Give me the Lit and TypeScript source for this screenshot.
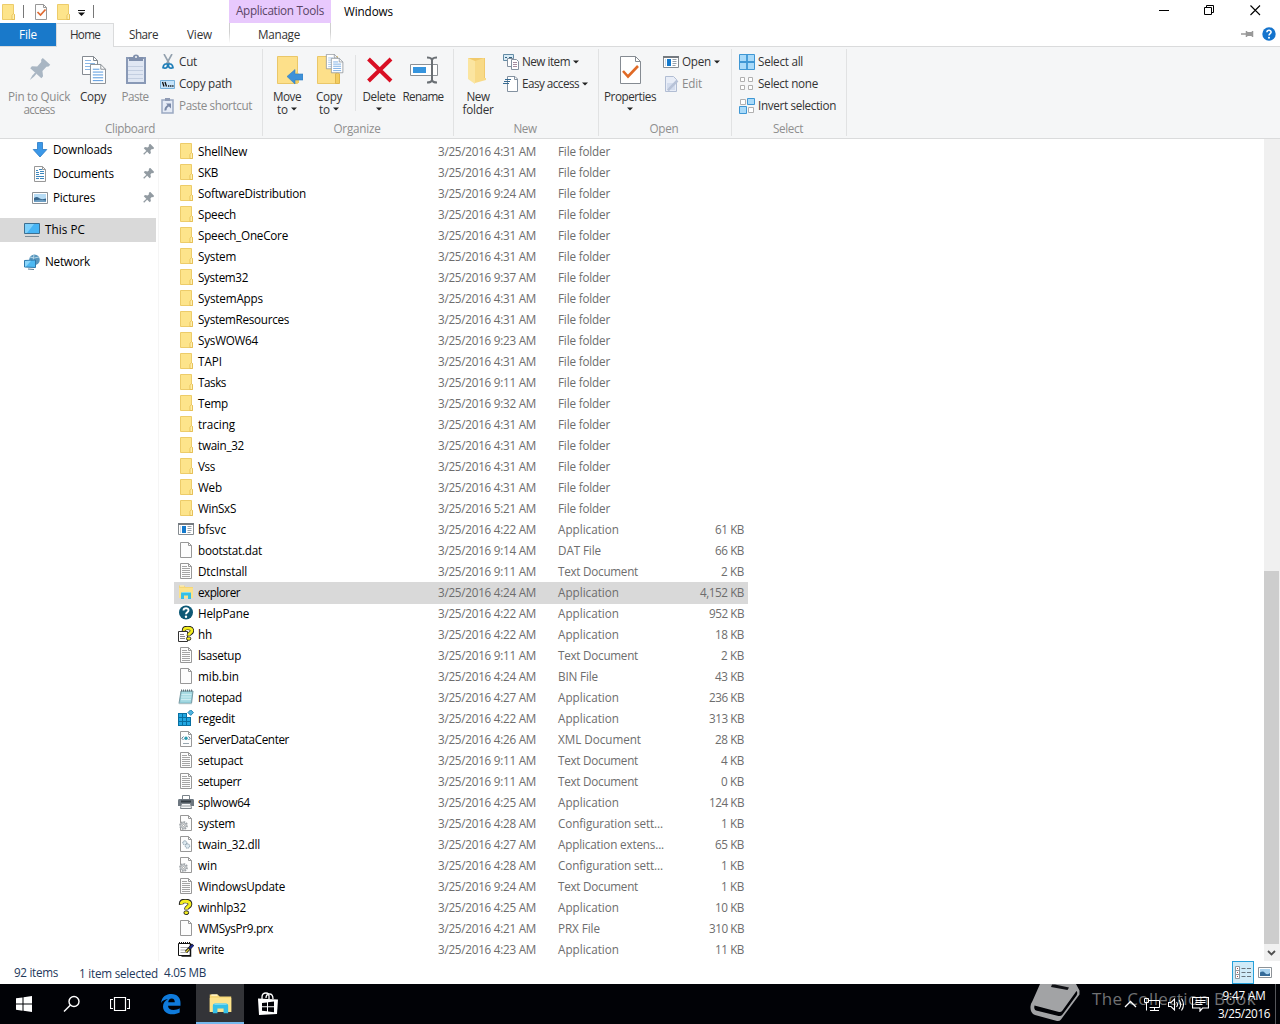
import { LitElement, html, svg, css, nothing, TemplateResult } from "lit";
import { customElement } from "lit/decorators.js";

const FAMILY = '"Open Sans", "Noto Sans", sans-serif';
const pen = document.createElement("canvas").getContext("2d")!;

/* Text set to a known width by spreading the difference over its letters. */
const fit = (text: string, width: number, size = 11.7) => {
  pen.font = `${size}px ${FAMILY}`;
  const gap = (width - pen.measureText(text).width) / text.length;
  return html`<span class="fit" style="font-size:${size}px;letter-spacing:${gap.toFixed(3)}px">${text}</span>`;
};

const icon = (w: number, h: number, body: unknown) =>
  html`<svg class="ico" width=${w} height=${h} viewBox="0 0 ${w} ${h}" fill="none">${body}</svg>`;

const page = svg`<path d="M2.500 .5h8l3 3v12h-11z" fill="#fdfdfd" stroke="#989898"/><path d="M10.500 .5v3h3" stroke="#989898"/>`;
const gear = svg`<circle cx="5.500" cy="10.500" r="3.400" fill="#e5e7e9" stroke="#a0a5a9" stroke-width="2" stroke-dasharray="1.600 1"/><circle cx="5.500" cy="10.500" r="2.600" fill="#dfe2e4" stroke="#a0a5a9" stroke-width=".8"/><circle cx="5.500" cy="10.500" r="1" fill="#fff" stroke="#888" stroke-width=".6"/>`;
const question = svg`<path d="M3.200 5.600C2.800 2.300 4.800 2 7.300 2s4.700.8 4.700 3.300c0 2.800-3.700 2.500-3.700 5.200" stroke="#222" stroke-width="4.600"/><path d="M3.300 5.300C3.200 2.600 4.800 2.200 7.300 2.200S11.900 2.900 11.900 5.200c0 2.600-3.600 2.400-3.600 5" stroke="#f4ee20" stroke-width="3"/><rect x="6" y="11.900" width="4.600" height="3.600" rx="1.700" fill="#f4ee20" stroke="#222"/>`;
const explorerArt = svg`<path d="M1 1.500h5l1.500 1.500H15v11H1z" fill="#f5d778"/><path d="M1 4h14v10H1z" fill="#fce28b"/><path d="M2 2h4" stroke="#fff6cf"/><path d="M3 15V9.500Q3 8 4.500 8h7Q13 8 13 9.500V15h-3v-3.500H6V15z" fill="#35bfe6"/><path d="M4 8.500h8" stroke="#7edbf3"/>`;

const small: Record<string, unknown> = {
  folder: svg`<path d="M2.500 .5h11v9l1 1v5h-12z" fill="#fde48b" stroke="#edcc6a"/><path d="M12 15.500v-4l1.500-2 1 1v5z" fill="#fff0ae" stroke="#e2b94c" stroke-width=".8"/>`,
  app: svg`<path d="M.5 2.500h15v11H.5z" fill="#fff" stroke="#858b90"/><path d="M0 3h16" stroke="#747a80" stroke-width="2"/><path d="M4 5h4v7H4z" fill="#1479cc"/><path d="M2.500 5v7" stroke="#c9d9e8"/><path d="M9.500 5.500h4M9.500 7.500h4M9.500 9.500h4M9.500 11.500h3" stroke="#96a1ab"/>`,
  file: page,
  text: svg`${page}<path d="M4 3.500h5M4 5.500h8M4 7.500h8M4 9.500h8M4 11.500h8M4 13.500h8" stroke="#a5a5a5"/>`,
  explorer: explorerArt,
  help: svg`<circle cx="8" cy="7.500" r="7" fill="#0d5875"/><path d="M5.500 5.500C5.600 2.400 10.600 2.500 10.500 5.300c0 2-2.500 2-2.500 4" stroke="#fff" stroke-width="1.900"/><circle cx="8" cy="11.800" r="1.200" fill="#fff"/>`,
  hh: svg`<path d="M.5 5.500h9v10h-9z" fill="#fff" stroke="#333"/><path d="M2 8.500h4M2 10.500h5M2 12.500h5" stroke="#888"/><g transform="translate(3 0) scale(.92)">${question}</g>`,
  notepad: svg`<path d="M3 2h12l-1.500 12.500H1z" fill="#8fc9d5" stroke="#7899a2"/><path d="M4 3l10 .3-1.300 9.500H2.500z" fill="#a9dce4"/><path d="M3.500 5.500h10M3 8h10M3 10.500h10" stroke="#d5f0f4" stroke-width=".8"/><path d="M3 1.500h12" stroke="#60747a" stroke-width="2" stroke-dasharray="1 1"/><path d="M1 15h13" stroke="#dfe8e9"/>`,
  regedit: svg`<path d="M0 3h9v4h4v9H0z" fill="#086fa1"/><path d="M1 4h3v3H1zM5 4h3v3H5zM1 8h3v3H1zM5 8h3v3H5zM1 12h3v3H1zM5 12h3v3H5zM9 12h3v3H9zM9 8h3v3H9z" fill="#22a7e2"/><path d="M12.700 -.2l2.800 2.800-2.800 2.800-2.800-2.800z" fill="#4fb4e0" stroke="#1274a5" stroke-width=".8"/>`,
  xml: svg`${page}<path d="M5.500 5.500L3.800 7.300l1.700 1.700M10.500 5.500l1.700 1.800L10.500 9" stroke="#587b96"/><circle cx="8" cy="7.300" r="1.700" fill="#2b9bb0"/><path d="M5 12.500h6" stroke="#99a7b0"/>`,
  printer: svg`<path d="M4.500 1.500h7v5h-7z" fill="#fff" stroke="#7a838a"/><path d="M1 5h14q1 0 1 1.500V12H0V6.500Q0 5 1 5z" fill="#6d7780"/><path d="M3 7.500h10" stroke="#333c43" stroke-width="2"/><path d="M3.500 9.500h9l1 5h-11z" fill="#f4f6f7" stroke="#7b8389"/><path d="M4 12h8" stroke="#9ba1a5"/>`,
  config: svg`${page}${gear}`,
  dll: svg`${page}<circle cx="6.800" cy="6.800" r="2" fill="#dce8ef" stroke="#8094a3" stroke-dasharray="1.200 .6"/><circle cx="9.500" cy="10" r="2.200" fill="#dce8ef" stroke="#8094a3" stroke-dasharray="1.200 .6"/>`,
  winhlp: question,
  write: svg`<path d="M.5 2.500h12v12H.5z" fill="#fff" stroke="#111"/><path d="M1 2h12" stroke="#111" stroke-width="2" stroke-dasharray="1 1"/><path d="M2.500 6.500h8M2.500 9h7M2.500 11.500h7" stroke="#aaa"/><path d="M12.500 3v12h-9" stroke="#111" stroke-width="1.500"/><path d="M15 3.500L8 11" stroke="#111" stroke-width="3"/><path d="M15 4l-3.500 3.500" stroke="#1d2b8f" stroke-width="2"/><path d="M11 8l-3 3" stroke="#e8d436" stroke-width="1.300"/>`,
  download: svg`<path d="M5.500 .5h5v7h4.300L8 15 1.200 7.500h4.300z" fill="#3b98e8" stroke="#2778c4" stroke-width=".8"/>`,
  documents: svg`${page}<path d="M4 4.500h2M7 3.500h3M4 6.500h3M8 5.500h4M4 8.500h3M8 7.500h4M4 10.500h8M4 12.500h3M8 12.500h4" stroke="#3d87bd"/>`,
  pictures: svg`<path d="M.5 2.500h15v11H.5z" fill="#fff" stroke="#8d9297"/><path d="M2 4h12v8H2z" fill="#b7dcf5"/><path d="M2 8q3-2 5 0t7 .5V12H2z" fill="#38668c"/><path d="M2 10.500q6-1.500 12 0V12H2z" fill="#6fa0c4"/>`,
  pc: svg`<path d="M.5 1.500h15v10H.5z" fill="#46b4f4" stroke="#3c6f91"/><path d="M1 2h9L3 11H1z" fill="#7dd0fb"/><path d="M1 14.500h14" stroke="#7d8c96"/>`,
  network: svg`<circle cx="10.500" cy="5.800" r="5.300" fill="#5896bd"/><path d="M6 3q4 2 9 0M10 .5q-2 5 1 10" stroke="#b3d5e6"/><path d="M.5 6.500l11-.5v7.500l-11-.5z" fill="#4db9f3" stroke="#2d78aa"/><path d="M1 7l6-.2L2 12.500H1z" fill="#8bd6fb"/><path d="M4 15l6 .5" stroke="#5a7d94"/>`,
  cut: svg`<path d="M4 0l5.500 10M12 0L6.500 10" stroke="#93a1ae" stroke-width="1.600"/><path d="M5.800 10Q3.500 10 3 13.800q2.500 1 4-.5.500-1.500 1-3.300zM10.200 10q2.300 0 2.800 3.800-2.500 1-4-.5-.5-1.500-1-3.300z" stroke="#1d7db7" stroke-width="1.700"/>`,
  path: svg`<path d="M.5 4.500h14v8H.5z" fill="#c5e3fa" stroke="#76afd9"/><path d="M2.500 6l1.500 4.500M5 6l1.500 4.500" stroke="#111" stroke-width="1.300"/><path d="M8 10h5.500" stroke="#111" stroke-width="1.500" stroke-dasharray="1.300 .8"/>`,
  shortcut: svg`<path d="M2 2h11v13H2z" fill="#e5ebf6" stroke="#9ba9c2" stroke-width="1.500"/><path d="M5 0h5v3H5z" fill="#8f9bb4"/><path d="M5.500 12.500q-.5-3 3-5" stroke="#7988a7" stroke-width="2"/><path d="M6 5.500h5v5z" fill="#7988a7"/>`,
  newItem: svg`<path d="M.5 .5h10v6H.5z" fill="#d8ebf6" stroke="#638ba5"/><path d="M2 3.500h2M6 3.500h3" stroke="#32627f"/><path d="M4.500 4.500h6v8h-6z" fill="#fff" stroke="#8391a0"/><path d="M8.500 5.500h5l2 2v8h-7z" fill="#fff" stroke="#8391a0"/><path d="M10 8.500h4M10 10.500h4M10 12.500h4" stroke="#a58b9f"/>`,
  access: svg`<path d="M4.500 .5h7.500l2.500 2.500v12.500h-10z" fill="#fff" stroke="#8391a0"/><path d="M11.500 .5v3h3" stroke="#8391a0"/><path d="M2 3.500h6M1 5.500h6M0 7.500h6" stroke="#376b91"/>`,
  edit: svg`<path d="M2.500 .5h8l3 3v12h-11z" fill="#e8edf7" stroke="#b1bdd3"/><path d="M4 7h8v7H4z" fill="#d3dced"/><path d="M14.500 4.500L7 12l-2 2.500" stroke="#b7c2d7" stroke-width="2.500"/>`,
  all: svg`<path d="M.5 .5h15v15H.5z" fill="#a9daf9" stroke="#3f97d4"/><path d="M8 0v16M0 8h16" stroke="#3f97d4" stroke-width="1.800"/>`,
  none: svg`<path d="M1.500 1.500h4v4h-4zM9.500 1.500h4v4h-4zM1.500 9.500h4v4h-4zM9.500 9.500h4v4h-4z" fill="#fff" stroke="#b0b0b0"/>`,
  invert: svg`<path d="M1.500 1.500h5v5h-5zM9.500 9.500h5v5h-5z" fill="#fff" stroke="#b0b0b0"/><path d="M8.500 .5h7v6h-7zM.5 8.500h7v7h-7z" fill="#a9daf9" stroke="#3f97d4"/>`,
};

const sIcon = (name: string) => icon(16, 16, small[name]);

const bigPage = svg`<path d="M.5 .5h11l5 5v15H.5z" fill="#fff" stroke="#858b92"/><path d="M11.500 .5v5h5" stroke="#858b92"/>`;
const lines = (c: string) => svg`<path d="M3 5.500h7M3 8.500h11M3 11.500h11M3 14.500h11M3 17.500h11" stroke=${c}/>`;
const big: Record<string, unknown> = {
  pin: svg`<g transform="translate(17.500 14) rotate(42)"><path d="M-5-9H5v2.500L3.500-5v6l4 3.500V7h-15V4.500l4-3.500v-6L-5-6.500z" fill="#a9b6c3"/><path d="M-1 7h2v4l-1 5-1-5z" fill="#a9b6c3"/></g>`,
  copy: svg`<g transform="translate(5 2)"><path d="M.5 .5h11l4 4v14H.5z" fill="#fff" stroke="#858b92"/><path d="M11.500 .5v4h4" stroke="#858b92"/><path d="M3 4.500h6M3 7.500h10M3 10.500h10M3 13.500h10" stroke="#8bb7e6"/></g><g transform="translate(13 10) scale(.94 .95)">${bigPage}${lines("#4f94dc")}</g>`,
  paste: svg`<path d="M8 4h18v25H8z" fill="#e0e7f3" stroke="#8999b6" stroke-width="2"/><path d="M9 12.500h15M9 16.500h15M9 20.500h15M9 24.500h15" stroke="#c3cee0"/><path d="M10 3h4q0-2.500 3-2.500T20 3h4v4H10z" fill="#8090ad"/><circle cx="17" cy="3" r="1" fill="#f5f6f7"/>`,
  move: svg`<path d="M6.500 2.500h20v27h-20z" fill="#fde08a" stroke="#eac769"/><path d="M24 29V20l2-2 2 2v9z" fill="#f3cd61"/><path d="M16 22.500l8-7v4.500h8v6h-8v4z" fill="#3e91d8" stroke="#2f80c4" stroke-width=".6"/>`,
  copyTo: svg`<path d="M4.500 2.500h20v27h-20z" fill="#fde08a" stroke="#eac769"/><path d="M22.500 29.500V20l2-2 2 2v9.500z" fill="#f3cd61" stroke="#dfb64d"/><g transform="translate(13 0) scale(.72)">${bigPage}${lines("#8bb7e6")}</g><g transform="translate(18 4) scale(.72)">${bigPage}${lines("#4f94dc")}</g>`,
  delete: svg`<path d="M5.500 5L28 27M28 5L5.500 27" stroke="#d90f24" stroke-width="4"/>`,
  rename: svg`<path d="M3.500 10.500h27v11h-27z" fill="#fff" stroke="#8b9095"/><path d="M6 13h13v6H6z" fill="#3695de"/><path d="M25 4v24M20 3.500q4 0 5 2 1-2 5-2M20 28.500q4 0 5-2 1 2 5 2" stroke="#6b7075" stroke-width="2"/>`,
  newFolder: svg`<path d="M6 4h17v21H6z" fill="#f1ca6c"/><path d="M6 4l7 3v23l-7-5z" fill="#fbe5a0"/><path d="M13 7l9-3v20h2v2l-11 3z" fill="#f8da87"/>`,
  properties: svg`<path d="M6.500 2.500h15l5 5v22h-20z" fill="#fff" stroke="#858b92"/><path d="M21.500 2.500v5h5" stroke="#858b92"/><path d="M9 17l5 5.500L24 12" stroke="#e06a26" stroke-width="2.600"/>`,
};

const arrow = html`<svg class="ico" width="6" height="4" viewBox="0 0 6 4"><path d="M0 .5h6L3 3.500z" fill="#222"/></svg>`;

type Line = [string, number];
const bigButton = (art: string, width: number, rows: Line[], opts: { dim?: boolean; drop?: number } = {}) => html`
  <div class="big ${opts.dim ? "dim" : ""}" style="width:${width}px">
    ${icon(32, 32, big[art])}
    ${rows.map(([t, w], i) => html`<div class="cap">${fit(t, w)}${opts.drop === i ? arrow : nothing}</div>`)}
    ${opts.drop === rows.length ? html`<div class="cap lone">${arrow}</div>` : nothing}
  </div>`;
const cmd = (art: string, t: string, w: number, opts: { dim?: boolean; drop?: boolean } = {}) =>
  html`<div class="cmd ${opts.dim ? "dim" : ""}">${sIcon(art)}${fit(t, w)}${opts.drop ? arrow : nothing}</div>`;
const group = (cls: string, title: string, w: number, body: TemplateResult) =>
  html`<section class="group ${cls}"><div class="tools">${body}</div><div class="title">${fit(title, w)}</div></section>`;

type Row = [string, string, number, string, string, string?];
const rows: Row[] = [
  ["folder", "ShellNew", 49, "4:31", "File folder"],
  ["folder", "SKB", 20, "4:31", "File folder"],
  ["folder", "SoftwareDistribution", 108, "9:24", "File folder"],
  ["folder", "Speech", 38, "4:31", "File folder"],
  ["folder", "Speech_OneCore", 90, "4:31", "File folder"],
  ["folder", "System", 38, "4:31", "File folder"],
  ["folder", "System32", 50, "9:37", "File folder"],
  ["folder", "SystemApps", 65, "4:31", "File folder"],
  ["folder", "SystemResources", 91, "4:31", "File folder"],
  ["folder", "SysWOW64", 60, "9:23", "File folder"],
  ["folder", "TAPI", 24, "4:31", "File folder"],
  ["folder", "Tasks", 28, "9:11", "File folder"],
  ["folder", "Temp", 30, "9:32", "File folder"],
  ["folder", "tracing", 37, "4:31", "File folder"],
  ["folder", "twain_32", 46, "4:31", "File folder"],
  ["folder", "Vss", 17, "4:31", "File folder"],
  ["folder", "Web", 24, "4:31", "File folder"],
  ["folder", "WinSxS", 38, "5:21", "File folder"],
  ["app", "bfsvc", 28, "4:22", "Application", "61 KB"],
  ["file", "bootstat.dat", 64, "9:14", "DAT File", "66 KB"],
  ["text", "DtcInstall", 49, "9:11", "Text Document", "2 KB"],
  ["explorer", "explorer", 42, "4:24", "Application", "4,152 KB"],
  ["help", "HelpPane", 51, "4:22", "Application", "952 KB"],
  ["hh", "hh", 14, "4:22", "Application", "18 KB"],
  ["text", "lsasetup", 43, "9:11", "Text Document", "2 KB"],
  ["file", "mib.bin", 41, "4:24", "BIN File", "43 KB"],
  ["notepad", "notepad", 44, "4:27", "Application", "236 KB"],
  ["regedit", "regedit", 37, "4:22", "Application", "313 KB"],
  ["xml", "ServerDataCenter", 91, "4:26", "XML Document", "28 KB"],
  ["text", "setupact", 45, "9:11", "Text Document", "4 KB"],
  ["text", "setuperr", 43, "9:11", "Text Document", "0 KB"],
  ["printer", "splwow64", 52, "4:25", "Application", "124 KB"],
  ["config", "system", 37, "4:28", "Configuration sett...", "1 KB"],
  ["dll", "twain_32.dll", 62, "4:27", "Application extens...", "65 KB"],
  ["config", "win", 19, "4:28", "Configuration sett...", "1 KB"],
  ["text", "WindowsUpdate", 87, "9:24", "Text Document", "1 KB"],
  ["winhlp", "winhlp32", 48, "4:25", "Application", "10 KB"],
  ["file", "WMSysPr9.prx", 75, "4:21", "PRX File", "310 KB"],
  ["write", "write", 26, "4:23", "Application", "11 KB"],
];
const typeWidth: Record<string, number> = {
  "File folder": 52, Application: 61, "DAT File": 43, "Text Document": 80, "BIN File": 40,
  "XML Document": 83, "Configuration sett...": 105, "Application extens...": 106, "PRX File": 42,
};
const sizeWidth: Record<number, number> = { 4: 23, 5: 29, 6: 35, 8: 44 };

const pinMark = icon(12, 12, svg`<g transform="translate(7 5) rotate(45)"><path d="M-3-4.500h6v1.800l-1 .7V0l2.200 1.500V3.200h-8.400V1.500L-2 0v-2l-1-.7z" fill="#929ba2"/><path d="M0 3v4.500" stroke="#929ba2" stroke-width="1.300"/></g>`);
const nav = (art: string, t: string, w: number) =>
  html`<div class="nav sub">${sIcon(art)}${fit(t, w)}<span class="grow"></span>${pinMark}</div>`;

@customElement("app-root")
export class AppRoot extends LitElement {
  static styles = css`
    :host { display: flex; flex-direction: column; position: relative; width: 1280px; height: 1024px; overflow: hidden; background: #fff; color: #000; font-family: "Open Sans", "Noto Sans", sans-serif; font-size: 11.7px; line-height: 16px; }
    * { box-sizing: border-box; }
    .fit { white-space: pre; flex: none; }
    .ico { display: block; flex: none; }
    .grow { flex: 1; }
    .top { display: flex; height: 46px; flex: none; }
    .left { width: 229px; display: flex; flex-direction: column; }
    .quick { height: 23px; display: flex; align-items: center; }
    .bar { width: 1px; height: 13px; background: #777; }
    .q1 { margin-left: 7px; }
    .q2 { margin: 0 0 0 9px; }
    .q3 { margin-left: 6px; }
    .q4 { margin: 3px 0 0 7px; }
    .q5 { margin-left: 8px; }
    .tabs { height: 23px; display: flex; color: #333; }
    .tab { height: 23px; display: flex; align-items: center; justify-content: center; width: 56px; padding-bottom: 2px; }
    .tab.file { background: #1979ca; color: #fff; padding-bottom: 1px; }
    .tab.home { width: 58px; height: 24px; background: #f5f6f7; border: 1px solid #dadbdc; border-bottom: 0; z-index: 1; padding-bottom: 3px; }
    .tab.share { width: 59px; }
    .tab.view { width: 53px; }
    .context { width: 102px; display: flex; flex-direction: column; }
    .band { height: 23px; background: #e8c9fd; color: #5a4566; display: flex; justify-content: center; padding-top: 2px; }
    .manage { height: 23px; display: flex; align-items: center; justify-content: center; color: #333; padding: 0 2px 2px 0; border: 0 solid; border-width: 0 1px; border-image: linear-gradient(#cfcfcf 40%, #fff 85%) 1; }
    .caption { padding: 3px 0 0 13px; }
    .window { width: 140px; display: flex; flex-direction: column; }
    .sys { display: flex; padding: 5px 0 0 18px; gap: 34px; height: 26px; }
    .assist { display: flex; align-items: center; justify-content: flex-end; gap: 8px; padding-right: 4px; height: 15px; }
    .ribbon { flex: none; height: 93px; display: flex; background: #f5f6f7; border: 1px solid #dadbdc; border-width: 1px 0; color: #333; }
    .group { height: 91px; display: flex; flex-direction: column; border-right: 1px solid; border-image: linear-gradient(#f5f6f7 3px, #e1e2e3 3px, #e1e2e3 88px, #f5f6f7 88px) 1; }
    .g1 { width: 263px; } .g2 { width: 191px; } .g3 { width: 145px; } .g4 { width: 133px; } .g5 { width: 115px; }
    .g1 .tools { padding-left: 5px; } .g2 .tools { padding-left: 3px; } .g3 .tools { padding-left: 4px; } .g4 .tools { padding-left: 3px; } .g5 .tools { padding-left: 2px; }
    .tools { display: flex; height: 73px; }
    .title { display: flex; justify-content: center; color: #8f8f8f; padding-right: 2px; }
    .big { display: flex; flex-direction: column; align-items: center; padding-top: 7px; }
    .big .ico { margin-bottom: 3px; }
    .cap { height: 13px; line-height: 12px; display: flex; align-items: center; justify-content: center; gap: 3px; }
    .cap .ico { margin: 1px 0 0; }
    .cap.lone { height: 12px; }
    .dim { color: #8b8b8b; }
    .list { padding: 4px 0 0 5px; }
    .g1 .list { padding-left: 3px; }
    .cmd { height: 22px; display: flex; align-items: center; gap: 3px; }
    .cmd .fit, .nav .fit { margin-bottom: 2px; }
    .split { width: 1px; height: 56px; background: #e1e2e3; margin: 8px 2px 0 5px; }
    .body { height: 822px; flex: none; display: flex; overflow: hidden; }
    .side { width: 159px; border-right: 1px solid #f5f5f5; padding-right: 2px; flex: none; overflow: hidden; }
    .nav { height: 24px; display: flex; align-items: center; gap: 5px; padding: 0 2px 0 24px; }
    .nav.sub { padding-left: 32px; }
    .nav:first-child { margin-top: -1px; }
    .nav.pc { margin: 8px 0; background: #d9d9d9; }
    .files { flex: 1; padding: 2px 0 0 15px; }
    .row { width: 574px; height: 21px; display: grid; grid-template-columns: 20px 240px 120px 1fr auto; align-items: center; padding: 0 4px 1px; color: #6d6d6d; }
    .row.on { height: 22px; margin-bottom: -1px; padding-bottom: 2px; background: #d9d9d9; }
    .name { color: #000; }
    .scroll { width: 16px; background: #f0f0f0; display: flex; flex-direction: column; padding: 432px 1px 0 0; align-items: center; }
    .thumb { width: 15px; height: 373px; background: #cdcdcd; margin-bottom: 5px; }
    .status { height: 23px; flex: none; display: flex; align-items: center; padding-left: 14px; color: #1e395b; }
    .status .fit { margin-bottom: 1px; }
    .s2 { margin: 0 6px 0 21px; }
    .mode { width: 22px; height: 23px; border: 1px solid #26a0da; background: #d0ebf8; display: flex; align-items: center; justify-content: center; }
    .thumbs { margin: 0 8px 0 4px; }
    .task { height: 40px; flex: none; display: flex; background: #010206; color: #fff; position: relative; }
    .tb { width: 48px; height: 40px; display: flex; align-items: center; justify-content: center; }
    .tb.narrow { width: 52px; padding-left: 2px; }
    .tb.active { background: #333438; border-bottom: 2px solid #76b9ed; }
    .mark { position: absolute; left: 1028px; top: 0; display: flex; gap: 12px; color: #707173; }
    .mark .fit { padding-top: 3px; line-height: 24px; }
    .tray { display: flex; align-items: center; position: relative; gap: 7px; }
    .clock { display: flex; flex-direction: column; align-items: center; width: 54px; line-height: 18px; padding: 2px 0 0 2px; height: 40px; }
    .edge { width: 1px; height: 40px; background: #55565a; margin: 0 4px 0 -2px; }
  `;

  render() {
    return html`
      <header class="top">
        <div class="left">
          <div class="quick">
            ${sIcon("folder")}<i class="bar q1"></i>
            <span class="q2">${icon(16, 16, svg`${page}<path d="M4.500 8l3 3 5-5.500" stroke="#df6930" stroke-width="1.700"/>`)}</span>
            <span class="q3">${sIcon("folder")}</span>
            <span class="q4">${icon(7, 7, svg`<path d="M0 .5h7" stroke="#111"/><path d="M0 2.500h7L3.500 6z" fill="#111"/>`)}</span>
            <i class="bar q5"></i>
          </div>
          <div class="tabs">
            <div class="tab file">${fit("File", 18)}</div>
            <div class="tab home">${fit("Home", 30)}</div>
            <div class="tab share">${fit("Share", 29)}</div>
            <div class="tab view">${fit("View", 25)}</div>
          </div>
        </div>
        <div class="context">
          <div class="band">${fit("Application Tools", 88)}</div>
          <div class="manage">${fit("Manage", 42)}</div>
        </div>
        <div class="caption">${fit("Windows", 49)}</div>
        <span class="grow"></span>
        <div class="window">
          <div class="sys">
            ${icon(12, 11, svg`<path d="M1 5.500h10" stroke="#000"/>`)}
            ${icon(11, 11, svg`<path d="M.5 2.500h7v7h-7zM2.500 2.500v-2h7v7h-2" stroke="#000"/>`)}
            ${icon(12, 11, svg`<path d="M1.500 .5l9.500 9.500M11 .5L1.500 10" stroke="#000" stroke-width="1.100"/>`)}
          </div>
          <div class="assist">
            ${icon(13, 8, svg`<path d="M0 4h5M5.500 1v6M11.500 1v6" stroke="#999" stroke-width="1.500"/><path d="M6 2h5v4H6z" fill="#999"/>`)}
            ${icon(14, 14, svg`<circle cx="7" cy="7" r="6.700" fill="#1574cd"/><path d="M4.900 5.300C5 2.700 9.200 2.800 9.100 5.100 9 6.800 7 6.600 7 8.600" stroke="#fff" stroke-width="1.500"/><circle cx="7" cy="10.800" r="1" fill="#fff"/>`)}
          </div>
        </div>
      </header>

      <div class="ribbon">
        ${group("g1", "Clipboard", 50, html`
          ${bigButton("pin", 68, [["Pin to Quick", 62], ["access", 31]], { dim: true })}
          ${bigButton("copy", 40, [["Copy", 26]])}
          ${bigButton("paste", 44, [["Paste", 27]], { dim: true })}
          <div class="list">${cmd("cut", "Cut", 18)}${cmd("path", "Copy path", 53)}${cmd("shortcut", "Paste shortcut", 73, { dim: true })}</div>`)}
        ${group("g2", "Organize", 47, html`
          ${bigButton("move", 42, [["Move", 28], ["to", 11]], { drop: 1 })}
          ${bigButton("copyTo", 42, [["Copy", 26], ["to", 11]], { drop: 1 })}
          <i class="split"></i>
          ${bigButton("delete", 42, [["Delete", 33]], { drop: 1 })}
          ${bigButton("rename", 46, [["Rename", 41]])}`)}
        ${group("g3", "New", 23, html`
          ${bigButton("newFolder", 40, [["New", 23], ["folder", 31]])}
          <div class="list">${cmd("newItem", "New item", 48, { drop: true })}${cmd("access", "Easy access", 57, { drop: true })}</div>`)}
        ${group("g4", "Open", 29, html`
          ${bigButton("properties", 56, [["Properties", 52]], { drop: 1 })}
          <div class="list">${cmd("app", "Open", 29, { drop: true })}${cmd("edit", "Edit", 20, { dim: true })}</div>`)}
        ${group("g5", "Select", 30, html`
          <div class="list">${cmd("all", "Select all", 45)}${cmd("none", "Select none", 60)}${cmd("invert", "Invert selection", 78)}</div>`)}
      </div>

      <main class="body">
        <nav class="side">
          ${nav("download", "Downloads", 59)}${nav("documents", "Documents", 61)}${nav("pictures", "Pictures", 42)}
          <div class="nav pc">${sIcon("pc")}${fit("This PC", 40)}</div>
          <div class="nav">${sIcon("network")}${fit("Network", 45)}</div>
        </nav>
        <div class="files">
          ${rows.map(([art, name, w, time, type, size]) => html`
            <div class="row ${name === "explorer" ? "on" : ""}">
              ${sIcon(art)}
              <span class="name">${fit(name, w)}</span>
              <span>${fit(`3/25/2016 ${time} AM`, 98)}</span>
              <span>${fit(type, typeWidth[type])}</span>
              <span>${size ? fit(size, sizeWidth[size.length]) : nothing}</span>
            </div>`)}
        </div>
        <div class="scroll">
          <div class="thumb"></div>
          ${icon(9, 8, svg`<path d="M1 2l3.500 3.500L8 2" stroke="#505050" stroke-width="1.800"/>`)}
        </div>
      </main>

      <footer class="status">
        ${fit("92 items", 44)}<span class="s2">${fit("1 item selected", 79)}</span>${fit("4.05 MB", 42)}
        <span class="grow"></span>
        <div class="mode">${icon(16, 13, svg`<path d="M.5 .5h4v12h-4z" fill="#fff" stroke="#8b98a1"/><path d="M.5 4.500h4M.5 8.500h4" stroke="#8b98a1"/><path d="M2 2.500h1M2 6.500h1M2 10.500h1" stroke="#b04a4a"/><path d="M6.500 2.500h4M12 2.500h4M6.500 6.500h4M12 6.500h4M6.500 10.500h4M12 10.500h4" stroke="#69747c"/>`)}</div>
        <div class="thumbs">${icon(14, 12, svg`<path d="M.5 .5h13v10H.5z" fill="#fff" stroke="#8d9297"/><path d="M2 2h10v7H2z" fill="#a9d3f0"/><path d="M2 5.500q3-2 5 .5t5 0V9H2z" fill="#356b99"/>`)}</div>
      </footer>

      <div class="task">
        <div class="mark">
          ${icon(52, 40, svg`<path d="M12 0h36l3.500 6.500v4L33 35.500q-1.500 2-4 1.500L7 31Q2 29 2.500 22.500q.3-3 2-5.500z" fill="#a2a3a5"/><path d="M6.500 21.500L31 28q2 .5 3.500-1.500L48.500 7q1.500 1.500 0 4.500L34.500 30.500q-1.500 2-4 1.500L8 26.500Q5.500 25 6.500 21.500z" fill="#010206"/><path d="M24 .5h3l14 3-1.500 2.500L23 3z" fill="#111216"/>`)}
          ${fit("The Collection Book", 164, 17)}
        </div>
        <div class="tb">${icon(16, 16, svg`<path d="M0 2.300l6.500-.9v6.200H0zM7.500 1.200L16 0v7.600H7.500zM0 8.500h6.500v6.200L0 13.800zM7.500 8.500H16V16l-8.500-1.200z" fill="#fff"/>`)}</div>
        <div class="tb">${icon(18, 18, svg`<circle cx="11" cy="6.500" r="5" stroke="#fff" stroke-width="1.400"/><path d="M7.500 10L1 16.500" stroke="#fff" stroke-width="1.500"/>`)}</div>
        <div class="tb">${icon(20, 16, svg`<path d="M4.500 1.500h11v13h-11zM3 3.500H.5v9H3M17 3.500h2.500v9H17" stroke="#fff" stroke-width="1.200"/>`)}</div>
        <div class="tb narrow">${icon(22, 22, svg`<path d="M1 10C2 3.500 6 1 11.500 1 17.500 1 20.500 5 20.500 10v2.700H8c.2 3 2.400 4.300 5.500 4.300 2.500 0 4.500-.6 6.200-1.700v4.200C17.500 20.700 15 21.300 12.300 21.300 6.500 21.300 3 18 3 13.500 3 10.300 4.800 7.700 8 6 5 6.300 2.500 7.500 1 10zM8.200 9.300h6.600C14.800 7 13.800 5.500 11.700 5.500 9.700 5.500 8.500 7 8.200 9.300z" fill="#0f7bdc"/>`)}</div>
        <div class="tb active"><svg class="ico" width="23" height="21" viewBox="0.500 0.500 15 15" preserveAspectRatio="none" fill="none">${explorerArt}</svg></div>
        <div class="tb">${icon(22, 24, svg`<path d="M5 7V5q0-4 4-4 3 0 3 3v3M9 6q0-4 3.500-4T16 7" stroke="#fff" stroke-width="1.300"/><path d="M1 6.500l20 1-1 14.500-18 1z" fill="#fff"/><path d="M5 11l5-.6v3.900H5zM11 10.200l6-.8v4.900h-6zM5 15.300h5v4l-5-.6zM11 15.300h6v5l-6-.8z" fill="#010206"/>`)}</div>
        <span class="grow"></span>
        <div class="tray">
          ${icon(13, 8, svg`<path d="M1 7l5.500-5.500L12 7" stroke="#fff" stroke-width="1.300"/>`)}
          ${icon(17, 15, svg`<path d="M4.500 3.500h11v7h-10M10.500 11v2.500M6 13.500h9M.5 1.500h4v4h-4zM2.500 5.500v8" stroke="#fff"/>`)}
          ${icon(17, 15, svg`<path d="M.5 5.500h2.500L6.500 2v11L3 9.500H.5zM8.500 5q2 2.500 0 5M11 3q3.500 4.500 0 9M13.500 1.500q4 6 0 12" stroke="#fff" stroke-width="1.100"/>`)}
          ${icon(17, 16, svg`<path d="M.5 1.500h16v10.500h-6l-2.500 3v-3H.5z" stroke="#fff" stroke-width="1.200"/><path d="M3.500 4.500h10M3.500 6.500h10M3.500 8.500h7" stroke="#fff"/>`)}
          <div class="clock">${fit("9:47 AM", 43)}${fit("3/25/2016", 52)}</div>
          <i class="edge"></i>
        </div>
      </div>
    `;
  }
}
